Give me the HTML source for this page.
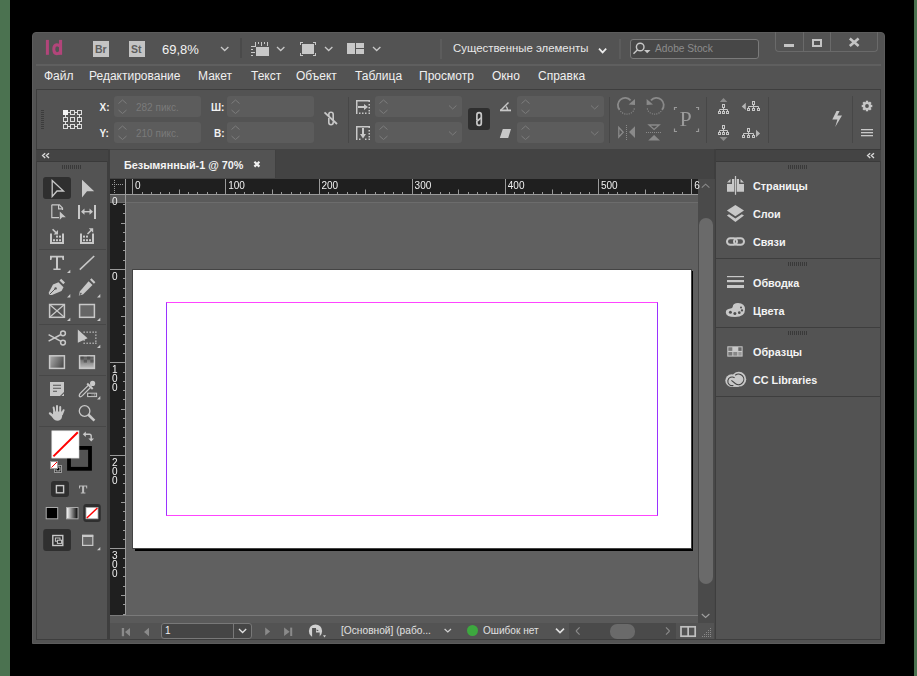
<!DOCTYPE html>
<html><head><meta charset="utf-8">
<style>
*{box-sizing:border-box}
html,body{margin:0;padding:0}
body{width:917px;height:676px;background:#000;position:relative;overflow:hidden;font-family:"Liberation Sans",sans-serif;color:#e8e8e8}
.a{position:absolute}
.t{position:absolute;white-space:nowrap;line-height:1}
svg{position:absolute;overflow:visible}
.fld{position:absolute;background:#5c5c5c;border-radius:3px}
.sep{position:absolute;width:1px;background:#474747}
.lbl{position:absolute;font-weight:bold;font-size:10px;color:#f2f2f2;line-height:1}
.pl{position:absolute;font-weight:bold;font-size:10.8px;color:#f4f4f4;line-height:1;white-space:nowrap}
.rn{position:absolute;font-size:10px;color:#f0f0f0;line-height:1}
</style></head><body>
<!-- green strips -->
<div class="a" style="left:0;top:0;width:10px;height:676px;background:#4b7250"></div>
<div class="a" style="left:914px;top:0;width:3px;height:676px;background:#4b7250"></div>

<!-- window -->
<div class="a" style="left:32px;top:32px;width:853px;height:612px;background:#535353;border-radius:4px 4px 0 0;border:1px solid #5c5c5c"></div>

<!-- title bar line -->
<div class="a" style="left:36px;top:64px;width:845px;height:2px;background:#5f5f5f"></div>

<!-- control panel border -->
<div class="a" style="left:36px;top:89px;width:845px;height:60px;border:1px solid #3e3e3e;border-bottom:none"></div>

<!-- panel header strips -->
<div class="a" style="left:36px;top:149px;width:72px;height:13px;background:#444;border-top:1px solid #3a3a3a;border-bottom:1px solid #3a3a3a"></div>
<div class="a" style="left:715px;top:149px;width:166px;height:13px;background:#444;border-top:1px solid #3a3a3a;border-bottom:1px solid #3a3a3a"></div>

<!-- tools panel body border -->
<div class="a" style="left:36px;top:161px;width:72px;height:479px;border:1px solid #3e3e3e;border-top:none"></div>
<!-- right panel border -->
<div class="a" style="left:715px;top:161px;width:166px;height:479px;border:1px solid #3e3e3e;border-top:none"></div>

<!-- doc window -->
<div class="a" style="left:108px;top:149px;width:608px;height:491px;background:#3e3e3e"></div>
<!-- tab bar -->
<div class="a" style="left:110px;top:149px;width:604px;height:30px;background:#434343"></div>
<div class="a" style="left:110px;top:150px;width:166px;height:28px;background:#535353"></div>
<div class="pl" style="left:124px;top:160px">Безымянный-1 @ 70%</div>
<div class="a" style="left:275px;top:150px;width:1px;height:28px;background:#404040"></div>

<!-- rulers -->
<div class="a" style="left:110px;top:179px;width:588px;height:16px;background:#1f1f1f"></div>
<div class="a" style="left:110px;top:194px;width:588px;height:1px;background:#9a9a9a"></div>
<!-- pasteboard -->
<div class="a" style="left:110px;top:195px;width:588px;height:420px;background:#606060"></div>
<div class="a" style="left:125px;top:195px;width:573px;height:7px;background:#5a5a5a"></div>
<div class="a" style="left:110px;top:195px;width:15px;height:7px;background:#5a5a5a"></div>
<div class="a" style="left:110px;top:202px;width:588px;height:1px;background:#6c6c6c"></div>
<div class="a" style="left:110px;top:203px;width:15px;height:412px;background:#1f1f1f"></div>
<div class="a" style="left:125px;top:179px;width:1px;height:436px;background:#9a9a9a"></div>
<div class="a" style="left:110px;top:615px;width:588px;height:1px;background:#7a7a7a"></div>
<div class="a" style="left:110px;top:616px;width:588px;height:7px;background:#5a5a5a"></div>

<!-- page -->
<div class="a" style="left:135px;top:271px;width:558px;height:280px;background:#000"></div>
<div class="a" style="left:132px;top:269px;width:560px;height:280px;background:#fff;border:1px solid #444"></div>
<div class="a" style="left:166px;top:302px;width:492px;height:214px;border:1px solid #ff44ff;border-left-color:#9a33ff;border-right-color:#9a33ff"></div>

<!-- vertical scrollbar -->
<div class="a" style="left:698px;top:179px;width:16px;height:444px;background:#4a4a4a"></div>
<div class="a" style="left:699px;top:218px;width:14px;height:366px;background:#6a6a6a;border-radius:7px"></div>

<!-- status bar -->
<div class="a" style="left:110px;top:623px;width:604px;height:16px;background:#535353"></div>
<div class="a" style="left:569px;top:623px;width:107px;height:16px;background:#4a4a4a"></div>
<div class="a" style="left:610px;top:624px;width:25px;height:15px;background:#6a6a6a;border-radius:7px"></div>
<div class="a" style="left:161px;top:623px;width:91px;height:16px;background:#454545;border:1px solid #787878;border-radius:3px"></div>
<div class="a" style="left:233px;top:623px;width:1px;height:16px;background:#787878"></div>
<div class="t" style="left:165px;top:626px;font-size:10px;color:#f0f0f0">1</div>
<div class="t" style="left:341px;top:626px;font-size:10.2px;color:#e0e0e0">[Основной] (рабо...</div>
<div class="a" style="left:467px;top:625px;width:11px;height:11px;background:#3da83f;border-radius:50%"></div>
<div class="t" style="left:483px;top:626px;font-size:10.1px;color:#e0e0e0">Ошибок нет</div>

<!-- menu -->
<div class="t" style="left:44px;top:70px;font-size:12px;color:#f0f0f0">Файл</div>
<div class="t" style="left:89px;top:70px;font-size:12px;color:#f0f0f0">Редактирование</div>
<div class="t" style="left:198px;top:70px;font-size:12px;color:#f0f0f0">Макет</div>
<div class="t" style="left:251px;top:70px;font-size:12px;color:#f0f0f0">Текст</div>
<div class="t" style="left:296px;top:70px;font-size:12px;color:#f0f0f0">Объект</div>
<div class="t" style="left:355px;top:70px;font-size:12px;color:#f0f0f0">Таблица</div>
<div class="t" style="left:419px;top:70px;font-size:12px;color:#f0f0f0">Просмотр</div>
<div class="t" style="left:492px;top:70px;font-size:12px;color:#f0f0f0">Окно</div>
<div class="t" style="left:538px;top:70px;font-size:12px;color:#f0f0f0">Справка</div>

<!-- title bar -->

<div class="a" style="left:93px;top:41px;width:16px;height:16px;background:#c4c4c4"></div>
<div class="t" style="left:95px;top:43.5px;font-size:10.5px;font-weight:bold;color:#5e5e5e">Br</div>
<div class="a" style="left:129px;top:41px;width:16px;height:16px;background:#c4c4c4"></div>
<div class="t" style="left:131px;top:43.5px;font-size:10.5px;font-weight:bold;color:#5e5e5e">St</div>
<div class="t" style="left:162px;top:43px;font-size:13px;color:#f2f2f2">69,8%</div>
<div class="t" style="left:453px;top:43px;font-size:11.4px;color:#e8e8e8">Существенные элементы</div>
<div class="a" style="left:240px;top:38px;width:2px;height:20px;background:#4a4a4a"></div>
<div class="a" style="left:440px;top:39px;width:2px;height:20px;background:#5c5c5c"></div>
<div class="a" style="left:619px;top:39px;width:2px;height:20px;background:#5c5c5c"></div>
<div class="a" style="left:630px;top:39px;width:129px;height:20px;background:#474747;border:1px solid #7a7a7a;border-radius:3px"></div>
<div class="t" style="left:655px;top:44px;font-size:10.2px;color:#8c8c8c">Adobe Stock</div>
<div class="a" style="left:775px;top:32px;width:103px;height:20px;border:1px solid #6a6a6a;border-top:none;border-radius:0 0 4px 4px"></div>
<div class="a" style="left:803px;top:32px;width:1px;height:19px;background:#6a6a6a"></div>
<div class="a" style="left:830px;top:32px;width:1px;height:19px;background:#6a6a6a"></div>

<!-- control panel fields -->
<div class="lbl" style="left:99.5px;top:102.5px">X:</div>
<div class="lbl" style="left:99.5px;top:128.5px">Y:</div>
<div class="fld" style="left:114px;top:96px;width:87px;height:21px"></div>
<div class="fld" style="left:114px;top:122px;width:87px;height:21px"></div>
<div class="t" style="left:136px;top:103px;font-size:10px;color:#7a7a7a">282 пикс.</div>
<div class="t" style="left:136px;top:129px;font-size:10px;color:#7a7a7a">210 пикс.</div>
<div class="lbl" style="left:211px;top:102.5px">Ш:</div>
<div class="lbl" style="left:214px;top:128.5px">В:</div>
<div class="fld" style="left:227px;top:96px;width:87px;height:21px"></div>
<div class="fld" style="left:227px;top:122px;width:87px;height:21px"></div>
<div class="sep" style="left:348px;top:97px;height:46px;background:#474747"></div>
<div class="fld" style="left:375px;top:96px;width:87px;height:21px"></div>
<div class="fld" style="left:375px;top:122px;width:87px;height:21px"></div>
<div class="a" style="left:468px;top:108px;width:22px;height:22px;background:#2f2f2f;border-radius:3px"></div>
<div class="fld" style="left:517px;top:96px;width:87px;height:21px"></div>
<div class="fld" style="left:517px;top:122px;width:87px;height:21px"></div>
<div class="sep" style="left:609px;top:97px;height:46px"></div>
<div class="sep" style="left:706px;top:97px;height:46px"></div>
<div class="sep" style="left:768px;top:97px;height:46px"></div>
<div class="sep" style="left:851.5px;top:96px;height:47px;width:1.5px"></div>

<!-- right panel -->
<div class="pl" style="left:753px;top:181px">Страницы</div>
<div class="pl" style="left:753px;top:209px">Слои</div>
<div class="pl" style="left:753px;top:237px">Связи</div>
<div class="a" style="left:716px;top:258px;width:164px;height:1px;background:#3e3e3e"></div>
<div class="pl" style="left:753px;top:278px">Обводка</div>
<div class="pl" style="left:753px;top:306px">Цвета</div>
<div class="a" style="left:716px;top:327px;width:164px;height:1px;background:#3e3e3e"></div>
<div class="pl" style="left:753px;top:347px">Образцы</div>
<div class="pl" style="left:753px;top:375px">CC Libraries</div>
<div class="a" style="left:716px;top:396px;width:164px;height:1px;background:#3e3e3e"></div>

<!-- tool selection bg -->
<div class="a" style="left:43px;top:177px;width:28px;height:22px;background:#2f2f2f;border-radius:3px"></div>
<div class="a" style="left:39px;top:249px;width:67px;height:1px;background:#474747"></div>
<div class="a" style="left:39px;top:324px;width:67px;height:1px;background:#474747"></div>
<div class="a" style="left:39px;top:375px;width:67px;height:1px;background:#474747"></div>
<div class="a" style="left:39px;top:426px;width:67px;height:1px;background:#474747"></div>

<div class="a" style="left:714px;top:179px;width:1px;height:460px;background:#484848"></div>
<svg width="917" height="676" viewBox="0 0 917 676" style="left:0;top:0">
<rect x="45.9" y="39.9" width="3" height="14.9" fill="#b2457a"/>
<rect x="59" y="39.9" width="3.1" height="14.9" fill="#b2457a"/>
<path d="M60 46.4Q58.8 44.8 56.8 44.8Q53.8 45 53.8 49.3Q53.9 53.7 56.8 53.7Q58.8 53.7 60 52.2" fill="none" stroke="#b2457a" stroke-width="3"/>
<g fill="#c8c8c8" stroke="none">
<!-- title: grid icon -->
<rect x="256" y="47" width="13" height="9"/>
<rect x="251" y="46" width="5" height="1"/>
<rect x="255" y="42" width="1" height="5"/>
<rect x="258" y="42" width="1" height="2"/>
<rect x="261" y="42" width="1" height="4"/>
<rect x="264" y="42" width="1" height="2"/>
<rect x="267" y="42" width="1" height="4"/>
<rect x="251" y="49" width="2" height="1"/>
<rect x="251" y="52" width="4" height="1"/>
<rect x="251" y="55" width="2" height="1"/>
<!-- screen mode -->
<rect x="302" y="44" width="12" height="10"/>
<path d="M300 45V42H303V43H301V45Z M313 42H316V45H315V43H313Z M300 53V56H303V55H301V53Z M315 53V55H313V56H316V53Z"/>
<!-- arrange -->
<rect x="347" y="43" width="8" height="11"/>
<rect x="356" y="43" width="8" height="5"/>
<rect x="356" y="49" width="8" height="5"/>
</g>
<g fill="none" stroke="#c8c8c8" stroke-width="1.3">
<path d="M221 47L224.7 50.5L228.4 47"/>
<path d="M277 47L280.7 50.5L284.4 47"/>
<path d="M325 47L328.7 50.5L332.4 47"/>
<path d="M373 47L376.7 50.5L380.4 47"/>
</g>
<path d="M599 48.6L602.6 52.4L606.2 48.6" fill="none" stroke="#ececec" stroke-width="1.7"/>
<!-- search icon -->
<g fill="none" stroke="#c8c8c8" stroke-width="1.4">
<circle cx="640.2" cy="47" r="3.8"/>
<path d="M637.5 49.8L633.5 53.8"/>
</g>
<path d="M644 50H650.5L647.2 53.2Z" fill="#c8c8c8"/>
<!-- window buttons -->
<rect x="784" y="44" width="10" height="3" fill="#c4c4c4"/>
<rect x="813" y="40" width="8" height="6" fill="none" stroke="#c4c4c4" stroke-width="2"/>
<path d="M849.8 38.6L858.6 46M858.6 38.6L849.8 46" stroke="#c4c4c4" stroke-width="2.6" fill="none"/>

<!-- control panel grip -->
<g fill="#3c3c3c">
<rect x="41" y="110" width="3" height="1"/><rect x="41" y="112" width="3" height="1"/><rect x="41" y="114" width="3" height="1"/><rect x="41" y="116" width="3" height="1"/><rect x="41" y="118" width="3" height="1"/><rect x="41" y="120" width="3" height="1"/><rect x="41" y="122" width="3" height="1"/><rect x="41" y="124" width="3" height="1"/><rect x="41" y="126" width="3" height="1"/><rect x="41" y="128" width="3" height="1"/>
</g>
<!-- reference point -->
<g fill="none" stroke="#dcdcdc" stroke-width="1">
<path d="M68 112.5H70M75 112.5H77M68 126.5H70M75 126.5H77M65.5 115V117M65.5 122V124M79.5 115V117M79.5 122V124"/>
<rect x="70.5" y="110.5" width="4" height="4"/><rect x="77.5" y="110.5" width="4" height="4"/>
<rect x="63.5" y="117.5" width="4" height="4"/><rect x="70.5" y="117.5" width="4" height="4"/><rect x="77.5" y="117.5" width="4" height="4"/>
<rect x="63.5" y="124.5" width="4" height="4"/><rect x="70.5" y="124.5" width="4" height="4"/><rect x="77.5" y="124.5" width="4" height="4"/>
</g>
<rect x="63" y="110" width="5" height="5" fill="#f4f4f4"/>
<!-- spinners -->
<g fill="none" stroke="#7c7c7c" stroke-width="1">
<path d="M118.5 103.5L122.5 100L126.5 103.5M118.5 110L122.5 113.5L126.5 110"/>
<path d="M118.5 129.5L122.5 126L126.5 129.5M118.5 136L122.5 139.5L126.5 136"/>
<path d="M231.5 103.5L235.5 100L239.5 103.5M231.5 110L235.5 113.5L239.5 110"/>
<path d="M231.5 129.5L235.5 126L239.5 129.5M231.5 136L235.5 139.5L239.5 136"/>
<path d="M379.5 103.5L383.5 100L387.5 103.5M379.5 110L383.5 113.5L387.5 110"/>
<path d="M379.5 129.5L383.5 126L387.5 129.5M379.5 136L383.5 139.5L387.5 136"/>
<path d="M521.5 103.5L525.5 100L529.5 103.5M521.5 110L525.5 113.5L529.5 110"/>
<path d="M521.5 129.5L525.5 126L529.5 129.5M521.5 136L525.5 139.5L529.5 136"/>
<path d="M449 105.5L452.7 109L456.4 105.5M449 131.5L452.7 135L456.4 131.5"/>
<path d="M591 105.5L594.7 109L598.4 105.5M591 131.5L594.7 135L598.4 131.5"/>
</g>
<!-- broken link -->
<g fill="none" stroke="#c8c8c8" stroke-width="1.6">
<path d="M328.8 117V114.5A2.2 2.2 0 0 1 333.2 114.5V120M333.2 121.5V122.5A2.2 2.2 0 0 1 328.8 122.5V118"/>
<path d="M324.5 112.3L337 124" stroke-width="1.8"/>
</g>
<!-- scale icons -->
<g fill="#c8c8c8">
<rect x="356" y="100" width="1.5" height="14"/><rect x="356" y="100" width="14" height="1.5"/><rect x="368.5" y="100" width="1.5" height="2"/>
<rect x="368.5" y="104" width="1.5" height="1.5"/><rect x="368.5" y="107" width="1.5" height="1.5"/><rect x="368.5" y="110" width="1.5" height="1.5"/><rect x="368.5" y="112.5" width="1.5" height="1.5"/>
<rect x="359" y="112.5" width="1.5" height="1.5"/><rect x="362" y="112.5" width="1.5" height="1.5"/><rect x="365" y="112.5" width="1.5" height="1.5"/>
<path d="M358 106H364V104L368 107L364 110V108H358Z"/>
<rect x="356" y="126" width="1.5" height="14"/><rect x="356" y="126" width="14" height="1.5"/><rect x="368.5" y="126" width="1.5" height="2"/>
<rect x="368.5" y="130" width="1.5" height="1.5"/><rect x="368.5" y="133" width="1.5" height="1.5"/><rect x="368.5" y="136" width="1.5" height="1.5"/><rect x="368.5" y="138.5" width="1.5" height="1.5"/>
<rect x="359" y="138.5" width="1.5" height="1.5"/><rect x="365" y="138.5" width="1.5" height="1.5"/>
<path d="M362 128H364V134H366L363 138.5L360 134H362Z"/>
</g>
<!-- chain toggle -->
<g fill="none" stroke="#c8c8c8" stroke-width="1.7">
<path d="M476.9 120.6V115A2.2 2.4 0 0 1 481.3 115V117.6L477.2 121.2"/>
<path d="M481.3 118V123A2.2 2.4 0 0 1 476.9 123V120.8"/>
</g>
<!-- angle -->
<g fill="none" stroke="#c8c8c8" stroke-width="1.4">
<path d="M500.5 110.5L508.5 102.5"/>
<path d="M506 106.5A5 5 0 0 1 507.5 110"/>
</g>
<rect x="500" y="109.5" width="11" height="1.8" fill="#c8c8c8"/>
<path d="M499.8 138L502.8 129H511L508.2 138Z" fill="#c8c8c8"/>
<!-- rotate -->
<g fill="none" stroke="#8a8a8a" stroke-width="1.8">
<path d="M619.6 109.8A7.2 7.2 0 0 1 630.6 100.4"/>
<path d="M662 109.8A7.2 7.2 0 0 0 651 100.4"/>
</g>
<path d="M628.6 104.4L635 99V105Z" fill="#8a8a8a"/>
<path d="M653 104.4L646.6 99V105Z" fill="#8a8a8a"/>
<g fill="#8a8a8a">
<circle cx="620.8" cy="111.6" r=".65"/><circle cx="622.6" cy="113" r=".65"/><circle cx="624.8" cy="113.9" r=".65"/><circle cx="627" cy="114.1" r=".65"/><circle cx="629.2" cy="113.8" r=".65"/><circle cx="631.4" cy="112.8" r=".65"/><circle cx="633.2" cy="111.2" r=".65"/><circle cx="634.2" cy="109" r=".65"/>
<circle cx="647.4" cy="109" r=".65"/><circle cx="648.4" cy="111.2" r=".65"/><circle cx="650.2" cy="112.8" r=".65"/><circle cx="652.4" cy="113.8" r=".65"/><circle cx="654.6" cy="114.1" r=".65"/><circle cx="656.8" cy="113.9" r=".65"/><circle cx="659" cy="113" r=".65"/><circle cx="660.8" cy="111.6" r=".65"/>
</g>
<!-- flip -->
<path d="M618.8 127.5V137L623.2 132.2Z" fill="none" stroke="#8a8a8a" stroke-width="1.3"/>
<path d="M635 126.2V138L629 132.1Z" fill="#8a8a8a"/>
<g fill="#8a8a8a">
<rect x="626" y="125" width="1" height="1"/><rect x="626" y="127" width="1" height="1"/><rect x="626" y="129" width="1" height="1"/><rect x="626" y="131" width="1" height="1"/><rect x="626" y="133" width="1" height="1"/><rect x="626" y="135" width="1" height="1"/><rect x="626" y="137" width="1" height="1"/><rect x="626" y="139" width="1" height="1"/>
<rect x="646" y="132" width="1" height="1"/><rect x="648" y="132" width="1" height="1"/><rect x="650" y="132" width="1" height="1"/><rect x="652" y="132" width="1" height="1"/><rect x="654" y="132" width="1" height="1"/><rect x="656" y="132" width="1" height="1"/><rect x="658" y="132" width="1" height="1"/><rect x="660" y="132" width="1" height="1"/>
</g>
<path d="M649 125H659.2L654.1 129.5Z" fill="none" stroke="#8a8a8a" stroke-width="1.3"/>
<path d="M648.2 140.6H660L654.1 135Z" fill="#8a8a8a"/>
<!-- P frame -->
<g fill="none" stroke="#9a9a9a" stroke-width="1.2">
<path d="M674.5 110V107.5H677M696 107.5H698.5V110M674.5 128.5V131.5H677M696 131.5H698.5V128.5"/>
</g>

<g style="will-change:transform"><text x="679.5" y="126" font-family="Liberation Serif" font-size="22" fill="#9a9a9a">P</text></g>
<!-- select container etc -->
<g fill="#8c8c8c">
<path d="M719.8 102H727.3L723.5 98Z"/>
<path d="M723.5 141L719.5 137H727.5Z"/>

</g>
<g fill="none" stroke="#c8c8c8" stroke-width="1">
<rect x="722.5" y="104.5" width="2" height="3"/>
<path d="M723.5 107.5V109.5M719.5 109.5H727.5M719.5 109.5V111M723.5 109.5V111M727.5 109.5V111"/>
<rect x="718.5" y="111.5" width="2" height="2"/><rect x="722.5" y="111.5" width="2" height="2"/><rect x="726.5" y="111.5" width="2" height="2"/>
<rect x="722.5" y="125.5" width="2" height="3"/>
<path d="M723.5 128.5V130.5M719.5 130.5H727.5M719.5 130.5V132M723.5 130.5V132M727.5 130.5V132"/>
<rect x="718.5" y="132.5" width="2" height="2"/><rect x="722.5" y="132.5" width="2" height="2"/><rect x="726.5" y="132.5" width="2" height="2"/>
<rect x="752.5" y="101.5" width="2" height="3"/>
<path d="M753.5 104.5V106.5M748.5 106.5H758.5M748.5 106.5V108M753.5 106.5V108M758.5 106.5V108"/>
<rect x="747.5" y="108.5" width="2" height="2"/><rect x="752.5" y="108.5" width="2" height="2"/><rect x="757.5" y="108.5" width="2" height="2"/>
<rect x="747.5" y="128.5" width="2" height="3"/>
<path d="M748.5 131.5V133.5M743.5 133.5H753.5M743.5 133.5V135M748.5 133.5V135M753.5 133.5V135"/>
<rect x="742.5" y="135.5" width="2" height="2"/><rect x="747.5" y="135.5" width="2" height="2"/><rect x="752.5" y="135.5" width="2" height="2"/>
</g>
<path d="M741.7 106.4L745.8 102.8V110Z M760.1 133.5L756 129.8V137.3Z" fill="#b4b4b4"/>
<!-- lightning -->
<path d="M836.5 111H839.6L837.3 115.4H842L835.2 127L837.4 119.5H832.3Z" fill="#c8c8c8"/>
<!-- gear -->
<g transform="translate(867 106)">
<circle r="4" fill="#c8c8c8"/>
<g fill="#c8c8c8">
<rect x="-1.2" y="-5.3" width="2.4" height="10.6"/>
<rect x="-1.2" y="-5.3" width="2.4" height="10.6" transform="rotate(45)"/>
<rect x="-1.2" y="-5.3" width="2.4" height="10.6" transform="rotate(90)"/>
<rect x="-1.2" y="-5.3" width="2.4" height="10.6" transform="rotate(135)"/>
</g>
<circle r="1.9" fill="#535353"/>
</g>
<g fill="#c8c8c8">
<rect x="861" y="129" width="12" height="1.3"/><rect x="861" y="132" width="12" height="1.3"/><rect x="861" y="135" width="12" height="1.3"/>
</g>
</svg>
<svg width="917" height="676" viewBox="0 0 917 676" style="left:0;top:0">
<!-- panel header glyphs -->
<g fill="none" stroke="#d8d8d8" stroke-width="1.4" stroke-linejoin="miter">
<path d="M45.2 153.2L42.6 155.6L45.2 158M49 153.2L46.4 155.6L49 158"/>
<path d="M870.2 153.2L867.6 155.6L870.2 158M874 153.2L871.4 155.6L874 158"/>
</g>
<!-- grips -->
<g fill="#393939">
<path d="M62 165h1v4h-1zM64 165h1v4h-1zM66 165h1v4h-1zM68 165h1v4h-1zM70 165h1v4h-1zM72 165h1v4h-1zM74 165h1v4h-1zM76 165h1v4h-1zM78 165h1v4h-1zM80 165h1v4h-1z"/>
<path d="M788 165h1v4h-1zM790 165h1v4h-1zM792 165h1v4h-1zM794 165h1v4h-1zM796 165h1v4h-1zM798 165h1v4h-1zM800 165h1v4h-1zM802 165h1v4h-1zM804 165h1v4h-1zM806 165h1v4h-1z"/>
<path d="M788 262h1v4h-1zM790 262h1v4h-1zM792 262h1v4h-1zM794 262h1v4h-1zM796 262h1v4h-1zM798 262h1v4h-1zM800 262h1v4h-1zM802 262h1v4h-1zM804 262h1v4h-1zM806 262h1v4h-1z"/>
<path d="M788 331h1v4h-1zM790 331h1v4h-1zM792 331h1v4h-1zM794 331h1v4h-1zM796 331h1v4h-1zM798 331h1v4h-1zM800 331h1v4h-1zM802 331h1v4h-1zM804 331h1v4h-1zM806 331h1v4h-1z"/>
</g>

<!-- TOOLS -->
<!-- selection (outline) -->
<path d="M52.2 180.5L63.5 191H57L52.2 196.5Z" fill="none" stroke="#c8c8c8" stroke-width="1.3" stroke-linejoin="miter"/>
<!-- direct selection (filled) -->
<path d="M82 179.7L94.2 191.2H87L82 197.4Z" fill="#c8c8c8"/>
<!-- page tool -->
<path d="M51.8 204.8H59.5L62.5 208V210" fill="none" stroke="#c8c8c8" stroke-width="1.2"/>
<path d="M51.8 204.8V217.6H59" fill="none" stroke="#c8c8c8" stroke-width="1.2"/>
<path d="M58.6 205V208.8H62.5" fill="none" stroke="#c8c8c8" stroke-width="1.2"/>
<path d="M59.8 211.6L65.8 217.2H62.2L59.8 219.8Z" fill="#c8c8c8"/>
<!-- gap tool -->
<g fill="#c8c8c8">
<rect x="78" y="205" width="2" height="14"/>
<rect x="94" y="205" width="2" height="14"/>
<rect x="83" y="211" width="8" height="1.4"/>
<path d="M81 211.7L84.5 208.6V214.8Z"/>
<path d="M93 211.7L89.5 208.6V214.8Z"/>
</g>
<!-- content collector -->
<g fill="#c8c8c8">
<path d="M50 233.5H52V242H62V233.5H64V244H50Z"/>
<rect x="53" y="239.2" width="2" height="2"/><rect x="56" y="239.2" width="2" height="2"/><rect x="59" y="239.2" width="2" height="2"/>
<rect x="56" y="235.6" width="2" height="2"/><rect x="59" y="235.6" width="2" height="2"/>
<path d="M52.6 229.2L56 232.6" stroke="#c8c8c8" stroke-width="1.6"/>
<path d="M58 230V234.4H53.6Z"/>
</g>
<!-- content placer -->
<g fill="#c8c8c8">
<path d="M80 233.5H82V242H92V233.5H94V244H80Z"/>
<rect x="83" y="239.2" width="2" height="2"/><rect x="86" y="239.2" width="2" height="2"/><rect x="89" y="239.2" width="2" height="2"/>
<rect x="83" y="235.6" width="2" height="2"/><rect x="86" y="235.6" width="2" height="2"/>
<path d="M87.5 234L91.5 230" stroke="#c8c8c8" stroke-width="1.6"/>
<path d="M93.2 228.3V232.8L88.8 228.3Z"/>
</g>
<!-- type tool -->
<g fill="#c8c8c8">
<path d="M50 255.8H64V260H62.6L62 257.6H58V268.4H60.6V270H53.4V268.4H56V257.6H52L51.4 260H50Z"/>
<path d="M67 273H70.3V269.7Z"/>
</g>
<!-- line -->
<path d="M79.8 269.6L94.2 256" stroke="#c8c8c8" stroke-width="1.6" fill="none"/>
<!-- pen -->
<g fill="#c8c8c8">
<path d="M59.5 280.5L61.2 278.8L65 282.6L63.3 284.3Z"/>
<path d="M58.5 282.2L63.5 287.2L61.5 291L52 295H49L48.8 292.5L53 284.5Z"/>
</g>
<path d="M49.5 294.5L55 289" stroke="#535353" stroke-width="1" fill="none"/>
<circle cx="55.6" cy="288.4" r="1.2" fill="#535353"/>
<path d="M67 297.4H70.3V294.1Z" fill="#c8c8c8"/>
<!-- pencil -->
<g fill="#c8c8c8">
<path d="M90 279.8L91.5 278.3L95.4 282.2L93.9 283.7Z"/>
<path d="M88.6 281.2L92.5 285.1L83 294.6L78.8 295.6L79.8 291.4Z"/>
</g>
<path d="M79.8 294.6L81.4 293" stroke="#535353" stroke-width="1.2"/>
<path d="M97 297.4H100.3V294.1Z" fill="#c8c8c8"/>
<!-- rectangle frame -->
<g fill="none" stroke="#c8c8c8" stroke-width="1.5">
<rect x="49.6" y="304.5" width="14.8" height="12.8"/>
<path d="M49.6 304.5L64.4 317.3M64.4 304.5L49.6 317.3" stroke-width="1.2"/>
</g>
<path d="M67 321H70.3V317.7Z" fill="#c8c8c8"/>
<!-- rectangle -->
<rect x="79.6" y="304.5" width="14.8" height="12.8" fill="#666" stroke="#c8c8c8" stroke-width="1.5"/>
<path d="M97 321H100.3V317.7Z" fill="#c8c8c8"/>
<!-- scissors -->
<g fill="none" stroke="#c8c8c8" stroke-width="1.5">
<circle cx="63" cy="333.3" r="2.4"/>
<circle cx="63" cy="342.6" r="2.4"/>
<path d="M61 334.5L48.6 341.2M61 341.4L48.6 334.6"/>
</g>
<!-- free transform -->
<path d="M77.8 329.5L87.6 338.2L77.8 342.7Z" fill="#c8c8c8"/>
<g fill="#c8c8c8">
<rect x="83.5" y="331.5" width="1.3" height="1.3"/><rect x="86.5" y="331.5" width="1.3" height="1.3"/><rect x="89.5" y="331.5" width="1.3" height="1.3"/><rect x="92.5" y="331.5" width="1.3" height="1.3"/><rect x="95.2" y="331.5" width="1.3" height="1.3"/>
<rect x="95.2" y="334.5" width="1.3" height="1.3"/><rect x="95.2" y="337.5" width="1.3" height="1.3"/><rect x="95.2" y="340.5" width="1.3" height="1.3"/><rect x="95.2" y="342.6" width="1.3" height="1.3"/>
<rect x="83.5" y="342.6" width="1.3" height="1.3"/><rect x="86.5" y="342.6" width="1.3" height="1.3"/><rect x="89.5" y="342.6" width="1.3" height="1.3"/><rect x="92.5" y="342.6" width="1.3" height="1.3"/>
<rect x="83.5" y="339.5" width="1.3" height="1.3"/>
<path d="M97 348H100.3V344.7Z"/>
</g>
<!-- gradient swatch -->
<defs>
<linearGradient id="g1" x1="0" y1="0" x2="1" y2="0.4"><stop offset="0" stop-color="#b0b0b0"/><stop offset="1" stop-color="#505050"/></linearGradient>
<linearGradient id="g2" x1="0" y1="0" x2="0" y2="1"><stop offset="0" stop-color="#505050"/><stop offset="1" stop-color="#c0c0c0"/></linearGradient>
<linearGradient id="g3" x1="0" y1="0" x2="1" y2="0"><stop offset="0" stop-color="#ffffff"/><stop offset="1" stop-color="#000"/></linearGradient>
</defs>
<rect x="49.6" y="355.8" width="14.8" height="12.6" fill="url(#g1)" stroke="#c8c8c8" stroke-width="1.5"/>
<rect x="79.6" y="355.8" width="14.8" height="12.6" fill="url(#g2)" stroke="#c8c8c8" stroke-width="1.5"/>
<g fill="#444" opacity=".6">
<rect x="80.4" y="356.6" width="3.3" height="3"/><rect x="87" y="356.6" width="3.3" height="3"/>
<rect x="83.7" y="359.6" width="3.3" height="3"/><rect x="90.3" y="359.6" width="3.3" height="3"/>
</g>
<!-- note -->
<g>
<path d="M50 382H64V392L60 396H50Z" fill="#c8c8c8"/>
<path d="M53 385.3H61M53 388.3H61M53 391.3H57" stroke="#535353" stroke-width="1.1"/>
<path d="M64.4 392.4L60.4 396.4H64.4Z" fill="#535353"/>
<path d="M64 393.4L61.4 396H64Z" fill="#c8c8c8"/>
</g>
<!-- eyedropper -->
<g>
<path d="M80.2 393.4L88.8 384.8L91 387L82.4 395.6Q80.5 397.4 79.6 396.6T80.2 393.4Z" fill="none" stroke="#c8c8c8" stroke-width="1.3"/>
<path d="M86.5 384.2L92 389.7L93.4 388.3L87.9 382.8Z" fill="#c8c8c8"/>
<circle cx="92.6" cy="383.4" r="2.6" fill="#c8c8c8"/>
<rect x="87.6" y="393.2" width="9" height="3.4" fill="none" stroke="#c8c8c8" stroke-width="1"/>
<rect x="89" y="394.2" width="1.6" height="1.4" fill="#333"/><rect x="91.4" y="394.2" width="1.6" height="1.4" fill="#666"/><rect x="93.8" y="394.2" width="1.6" height="1.4" fill="#999"/>
<path d="M97 399.4H100.3V396.1Z" fill="#c8c8c8"/>
</g>
<!-- hand -->
<g stroke="#c8c8c8" stroke-width="2" stroke-linecap="round" fill="none">
<path d="M53.6 407.4L54.6 413M57 406V413M60.2 407V413M63.6 410.2L62 414"/>
<path d="M50 413.4L54 417" stroke-width="2.4"/>
</g>
<path d="M53.2 411.6H62.8L62 417Q61 420.8 57.5 420.8Q54.4 420.8 52.6 417.6Z" fill="#c8c8c8"/>
<!-- zoom -->
<circle cx="84.6" cy="411" r="5.3" fill="none" stroke="#c8c8c8" stroke-width="1.3"/>
<path d="M88.4 414.8L94.4 420.6" stroke="#c8c8c8" stroke-width="2.6"/>
<!-- fill/stroke -->
<rect x="69" y="447.9" width="21" height="20.9" fill="none" stroke="#000" stroke-width="3.8"/>
<rect x="51.8" y="430.8" width="27.2" height="27.3" fill="#fff" stroke="#d0d0d0" stroke-width=".6"/>
<path d="M53.4 456.4L77.8 432.2" stroke="#ff0000" stroke-width="2"/>
<!-- swap arrow -->
<g fill="none" stroke="#c8c8c8" stroke-width="1.4">
<path d="M85 434.2H89.4Q91.2 434.2 91.2 436V439.4"/>
</g>
<path d="M82.8 434.2L85.8 431.4V437Z" fill="#c8c8c8"/>
<path d="M91.2 441.6L88.4 438.6H94Z" fill="#c8c8c8"/>
<!-- default fill stroke -->
<rect x="54.5" y="465.5" width="7" height="7" fill="#000" stroke="#9a9a9a" stroke-width="1"/>
<rect x="56" y="467" width="4" height="4" fill="none" stroke="#c8c8c8" stroke-width="1"/>
<rect x="50.5" y="461.5" width="7" height="7" fill="#fff" stroke="#9a9a9a" stroke-width="1"/>
<path d="M51.5 467.5L57 462" stroke="#f00" stroke-width="1"/>
<!-- formatting container -->
<rect x="51" y="481" width="18" height="16" rx="3" fill="#2f2f2f"/>
<rect x="56.4" y="485.6" width="7.2" height="7.2" fill="none" stroke="#c8c8c8" stroke-width="1.4"/>
<path d="M79 485.4H87.2V488.4H86.4L86 486.6H84.1V492.4H85.4V493.6H80.8V492.4H82.1V486.6H80.2L79.8 488.4H79Z" fill="#bcbcbc"/>
<!-- apply color -->
<rect x="46.2" y="507.5" width="11.5" height="11.3" fill="#000" stroke="#aaa" stroke-width="1"/>
<rect x="66.5" y="507.5" width="11.5" height="11.3" fill="url(#g3)" stroke="#aaa" stroke-width="1"/>
<rect x="83.3" y="504" width="17.5" height="18" rx="3" fill="#2f2f2f"/>
<rect x="86" y="507.5" width="12" height="11.3" fill="#fff" stroke="#aaa" stroke-width=".8"/>
<path d="M86.8 518L97.4 508" stroke="#f00" stroke-width="1.4"/>
<!-- screen modes -->
<rect x="43.2" y="529" width="27.8" height="22" rx="3" fill="#2f2f2f"/>
<rect x="52.8" y="535.5" width="10" height="10" fill="none" stroke="#c8c8c8" stroke-width="1.4"/>
<rect x="55.4" y="538" width="4.6" height="3.2" fill="none" stroke="#c8c8c8" stroke-width="1"/>
<rect x="57.4" y="540.2" width="4.2" height="3.2" fill="#2f2f2f" stroke="#c8c8c8" stroke-width="1"/>
<rect x="82.6" y="535.4" width="10.2" height="10" fill="#666" stroke="#c8c8c8" stroke-width="1.2"/>
<rect x="82" y="534.8" width="11.2" height="2.2" fill="#c8c8c8"/>
<path d="M97 550.2H100.3V546.9Z" fill="#c8c8c8"/>

<!-- RIGHT PANEL ICONS -->
<g fill="#c8c8c8">
<path d="M732 178.9H734.3V191.8H727V183.9H732Z"/>
<path d="M727 182.4L730.5 179V182.4Z"/>
<path d="M739 178.9H736.7V191.8H744V183.9H739Z"/>
<path d="M744 182.4L740.5 179V182.4Z"/>
<rect x="734.9" y="176" width="1.2" height="18.8"/>
<path d="M735.4 204.9L744 210.5L735.4 216.2L726.9 210.5Z"/>
<path d="M726.9 215.6L729 214.2L735.4 218.4L741.8 214.2L744 215.6L735.4 222Z"/>
</g>
<g fill="none" stroke="#c8c8c8" stroke-width="2">
<rect x="727" y="238.2" width="10" height="6.6" rx="3.3"/>
<rect x="734" y="238.2" width="10" height="6.6" rx="3.3"/>
</g>
<g fill="#c8c8c8">
<rect x="727" y="276" width="17" height="1.2"/>
<rect x="727" y="280" width="17" height="2.2"/>
<rect x="727" y="285" width="17" height="3"/>
<path d="M738 303Q745 303 745 309.5Q745 317 735 317Q726 317 725.8 312.5Q725.8 309 730.5 308.6Q732.6 308.4 732.8 306.6Q733 303 738 303Z"/>
</g>
<g fill="#4e4e4e">
<circle cx="730.4" cy="312.2" r="1.5"/><circle cx="734.9" cy="313.6" r="1.5"/><circle cx="739.3" cy="312.7" r="1.35"/><circle cx="742" cy="310.4" r="1.15"/><circle cx="741" cy="307.5" r="1"/>
</g>
<rect x="727.3" y="346.3" width="15.3" height="10.3" fill="#c8c8c8"/>
<g>
<rect x="728.3" y="347.3" width="4" height="3.6" fill="#777"/><rect x="733.3" y="347.3" width="4" height="3.6" fill="#c8c8c8"/><rect x="738.3" y="347.3" width="3.3" height="3.6" fill="#676767"/>
<rect x="728.3" y="352" width="4" height="3.6" fill="#777"/><rect x="733.3" y="352" width="4" height="3.6" fill="#878787"/><rect x="738.3" y="352" width="3.3" height="3.6" fill="#9a9a9a"/>
</g>
<!-- CC -->
<g fill="#c8c8c8">
<circle cx="731.6" cy="380.6" r="6.3"/>
<circle cx="738.8" cy="379.2" r="7.4"/>
<rect x="731.6" y="380" width="7.2" height="6.9"/>
</g>
<g fill="none" stroke="#444" stroke-width="1.1">
<path d="M731.4 380.4L735.6 383.8A5.3 5.3 0 1 0 735.2 375.2"/>
<path d="M734.6 377.8A4.3 4.3 0 1 0 733.4 385.4"/>
</g>
</svg>
<svg width="917" height="676" viewBox="0 0 917 676" style="left:0;top:0">
<path fill="#9a9a9a" d="M132 179h1v15h-1zM142 192h1v2h-1zM151 192h1v2h-1zM160 192h1v2h-1zM169 192h1v2h-1zM179 189.5h1v4.5h-1zM188 192h1v2h-1zM197 192h1v2h-1zM207 192h1v2h-1zM216 192h1v2h-1zM225 179h1v15h-1zM235 192h1v2h-1zM244 192h1v2h-1zM253 192h1v2h-1zM263 192h1v2h-1zM272 189.5h1v4.5h-1zM281 192h1v2h-1zM291 192h1v2h-1zM300 192h1v2h-1zM309 192h1v2h-1zM319 179h1v15h-1zM328 192h1v2h-1zM337 192h1v2h-1zM347 192h1v2h-1zM356 192h1v2h-1zM365 189.5h1v4.5h-1zM375 192h1v2h-1zM384 192h1v2h-1zM393 192h1v2h-1zM402 192h1v2h-1zM412 179h1v15h-1zM421 192h1v2h-1zM430 192h1v2h-1zM440 192h1v2h-1zM449 192h1v2h-1zM458 189.5h1v4.5h-1zM468 192h1v2h-1zM477 192h1v2h-1zM486 192h1v2h-1zM496 192h1v2h-1zM505 179h1v15h-1zM514 192h1v2h-1zM524 192h1v2h-1zM533 192h1v2h-1zM542 192h1v2h-1zM552 189.5h1v4.5h-1zM561 192h1v2h-1zM570 192h1v2h-1zM580 192h1v2h-1zM589 192h1v2h-1zM598 179h1v15h-1zM608 192h1v2h-1zM617 192h1v2h-1zM626 192h1v2h-1zM635 192h1v2h-1zM645 189.5h1v4.5h-1zM654 192h1v2h-1zM663 192h1v2h-1zM673 192h1v2h-1zM682 192h1v2h-1zM691 179h1v15h-1zM123 204h2v1h-2zM123 213h2v1h-2zM121 223h4v1h-4zM123 232h2v1h-2zM123 241h2v1h-2zM123 250h2v1h-2zM123 260h2v1h-2zM110 269h15v1h-15zM123 278h2v1h-2zM123 288h2v1h-2zM123 297h2v1h-2zM123 306h2v1h-2zM121 316h4v1h-4zM123 325h2v1h-2zM123 334h2v1h-2zM123 344h2v1h-2zM123 353h2v1h-2zM110 362h15v1h-15zM123 372h2v1h-2zM123 381h2v1h-2zM123 390h2v1h-2zM123 399h2v1h-2zM121 409h4v1h-4zM123 418h2v1h-2zM123 427h2v1h-2zM123 437h2v1h-2zM123 446h2v1h-2zM110 455h15v1h-15zM123 465h2v1h-2zM123 474h2v1h-2zM123 483h2v1h-2zM123 493h2v1h-2zM121 502h4v1h-4zM123 511h2v1h-2zM123 520h2v1h-2zM123 530h2v1h-2zM123 539h2v1h-2zM110 548h15v1h-15zM123 558h2v1h-2zM123 567h2v1h-2zM123 576h2v1h-2zM123 586h2v1h-2zM121 595h4v1h-4zM123 604h2v1h-2zM123 614h2v1h-2z"/>
<g font-family="Liberation Sans" font-size="10" fill="#f0f0f0"><text x="135.0" y="189.2">0</text><text x="228.2" y="189.2">100</text><text x="321.4" y="189.2">200</text><text x="414.6" y="189.2">300</text><text x="507.8" y="189.2">400</text><text x="601.0" y="189.2">500</text><text x="694.2" y="189.2">6</text><text x="112" y="279.7">0</text><text x="112" y="372.8">1</text><text x="112" y="381.8">0</text><text x="112" y="390.8">0</text><text x="112" y="465.9">2</text><text x="112" y="474.9">0</text><text x="112" y="483.9">0</text><text x="112" y="559.0">3</text><text x="112" y="568.0">0</text><text x="112" y="577.0">0</text><text x="112" y="204.5">0</text></g>
<!-- ruler origin crosshair -->
<g fill="#9a9a9a">
<rect x="114" y="184" width="1" height="1"/><rect x="116" y="184" width="1" height="1"/><rect x="118" y="184" width="1" height="1"/><rect x="120" y="184" width="1" height="1"/><rect x="122" y="184" width="1" height="1"/>
<rect x="112" y="184" width="1" height="1"/>
<rect x="114" y="180" width="1" height="1"/><rect x="114" y="182" width="1" height="1"/><rect x="114" y="186" width="1" height="1"/><rect x="114" y="188" width="1" height="1"/><rect x="114" y="190" width="1" height="1"/><rect x="114" y="192" width="1" height="1"/>
</g>
<!-- tab close -->
<path d="M254.4 161.8L259.4 166.6M259.4 161.8L254.4 166.6" stroke="#f0f0f0" stroke-width="2.2"/>
<!-- scroll arrows -->
<path d="M701.8 187.6L705.6 184.2L709.4 187.6" fill="none" stroke="#8a8a8a" stroke-width="1.1"/>
<path d="M701.8 614L705.6 617.5L709.4 614" fill="none" stroke="#a0a0a0" stroke-width="1.1"/>
<path d="M576 631L579.6 627.4M576 631L579.6 634.6" fill="none" stroke="#8a8a8a" stroke-width="1.1"/>
<path d="M669.6 631L666 627.4M669.6 631L666 634.6" fill="none" stroke="#8a8a8a" stroke-width="1.1"/>
<!-- nav buttons -->
<g fill="#8a8a8a">
<rect x="121.8" y="628" width="2.3" height="8.2"/>
<path d="M125 632.1L130 628V636.2Z"/>
<path d="M144 632L149 627.8V636.2Z"/>
<path d="M270.1 631.6L265.2 627.6V635.6Z"/>
<path d="M289.6 631.8L284.1 627.6V636Z"/>
<rect x="290.2" y="627.6" width="2" height="8.4"/>
</g>
<!-- page field chevron -->
<path d="M239 629L242.6 632.5L246.2 629" fill="none" stroke="#e0e0e0" stroke-width="1.3"/>
<!-- preflight -->
<clipPath id="pfc"><rect x="300" y="620" width="30" height="17"/></clipPath>
<circle cx="315.5" cy="631" r="6.6" fill="#d0d0d0" clip-path="url(#pfc)"/>
<path d="M312.1 628H316V632.4H319.7V637H312.1Z" fill="#535353"/>
<path d="M316.6 629.2L318.8 631H316.6Z" fill="#535353"/>
<path d="M323 635.2H326L324.5 637.4Z" fill="#d0d0d0"/>
<!-- status chevrons -->
<path d="M444.6 629L447.8 632L451 629" fill="none" stroke="#d0d0d0" stroke-width="1.2"/>
<path d="M556 628.6L560 632.6L564 628.6" fill="none" stroke="#e0e0e0" stroke-width="1.6"/>
<!-- split view -->
<rect x="681" y="626.8" width="14.2" height="9.4" fill="none" stroke="#c0c0c0" stroke-width="1.7"/>
<rect x="687.3" y="626.5" width="1.7" height="10" fill="#c0c0c0"/>
<!-- resize grip -->
<g fill="#8a8a8a">
<rect x="710" y="628" width="1" height="1"/>
<rect x="708" y="630" width="1" height="1"/><rect x="710" y="630" width="1" height="1"/>
<rect x="706" y="632" width="1" height="1"/><rect x="708" y="632" width="1" height="1"/><rect x="710" y="632" width="1" height="1"/>
<rect x="704" y="634" width="1" height="1"/><rect x="706" y="634" width="1" height="1"/><rect x="708" y="634" width="1" height="1"/><rect x="710" y="634" width="1" height="1"/>
<rect x="702" y="636" width="1" height="1"/><rect x="704" y="636" width="1" height="1"/><rect x="706" y="636" width="1" height="1"/><rect x="708" y="636" width="1" height="1"/><rect x="710" y="636" width="1" height="1"/>
</g>

</svg>
</body></html>
